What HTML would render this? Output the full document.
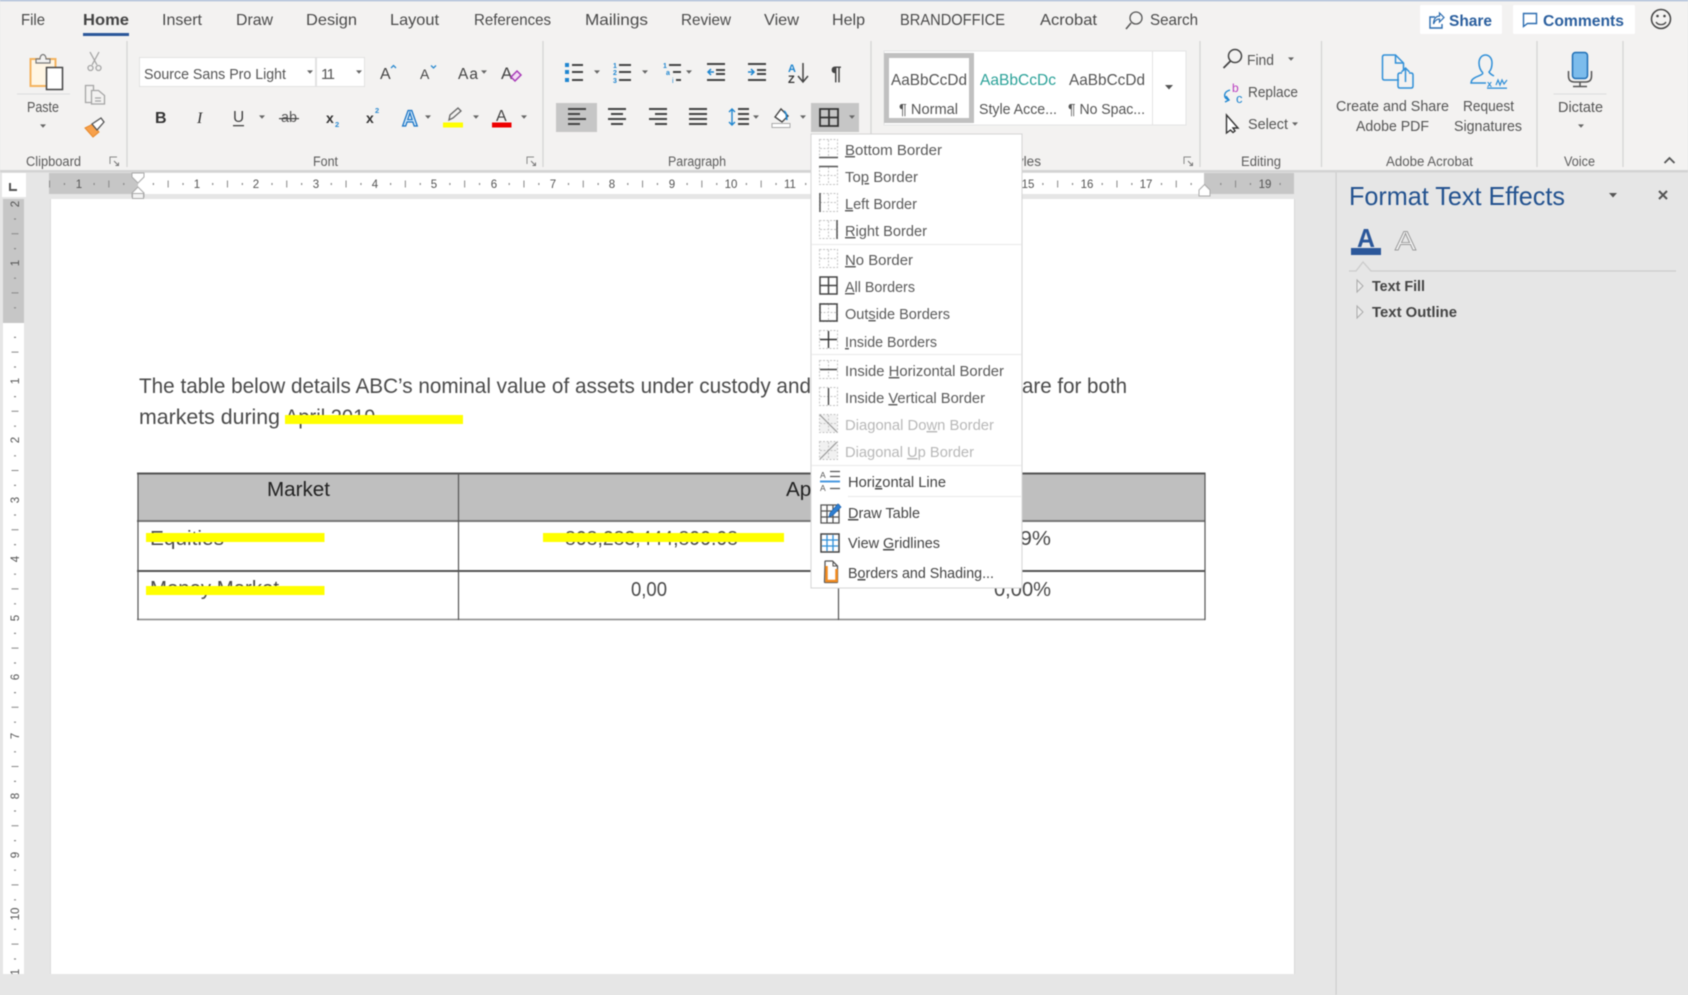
<!DOCTYPE html>
<html lang="en"><head><meta charset="utf-8"><title>Word - Borders menu</title>
<style>
html,body{margin:0;padding:0;width:1688px;height:995px;overflow:hidden;background:#e6e6e6}
svg{display:block;position:absolute;left:0;top:0;filter:blur(.45px)}
text{font-family:"Liberation Sans",sans-serif}
.tab{font-size:16px;fill:#4a4a4a}
.lb{font-size:13.5px;fill:#5c5c5c}
.rb{font-size:14.5px;fill:#555}
.m{font-size:14.5px;fill:#5a5a5a}
.d{fill:#b8b8b8}
.doc{font-size:21px;fill:#4a4a4a}
.tb{font-size:20px;fill:#4a4a4a}
.rn{font-size:11.5px;fill:#555;text-anchor:middle}
.u{text-decoration:underline}
.sd{fill:none;stroke:#444;stroke-width:2}
</style></head><body>
<svg width="1688" height="995" viewBox="0 0 1688 995" xmlns="http://www.w3.org/2000/svg">
<defs>
<path id="ar" d="M-3-1.6h6l-3 3.4z" fill="#666"/>
<g id="gr" fill="none" stroke="#c4c4c4" stroke-width="1" stroke-dasharray="2 1.5"><rect x=".5" y=".5" width="18" height="18"/><path d="M9.5 1v17M1 9.5h17"/></g>
<g id="lau" fill="none" stroke="#888" stroke-width="1"><path d="M0 7V0h7"/><path d="M4 4l4.5 4.5M8.5 5.5v3h-3" stroke="#777"/></g>
</defs>

<!-- backgrounds -->
<rect width="1688" height="995" fill="#e6e6e6"/>
<rect width="1688" height="170" fill="#f3f2f1"/>
<rect width="1688" height="1.2" fill="#a4b8d8"/>
<rect y="170" width="1688" height="2.5" fill="#d4d4d4"/>

<!-- tabs -->
<text class="tab" x="21" y="25" textLength="24" lengthAdjust="spacingAndGlyphs">File</text>
<text class="tab" x="83" y="25" textLength="46" lengthAdjust="spacingAndGlyphs" style="font-weight:bold;fill:#444">Home</text>
<rect x="83" y="33" width="46" height="3" fill="#2b579a"/>
<text class="tab" x="162" y="25" textLength="40" lengthAdjust="spacingAndGlyphs">Insert</text>
<text class="tab" x="236" y="25" textLength="37" lengthAdjust="spacingAndGlyphs">Draw</text>
<text class="tab" x="306" y="25" textLength="51" lengthAdjust="spacingAndGlyphs">Design</text>
<text class="tab" x="390" y="25" textLength="49" lengthAdjust="spacingAndGlyphs">Layout</text>
<text class="tab" x="474" y="25" textLength="77" lengthAdjust="spacingAndGlyphs">References</text>
<text class="tab" x="585" y="25" textLength="63" lengthAdjust="spacingAndGlyphs">Mailings</text>
<text class="tab" x="681" y="25" textLength="50" lengthAdjust="spacingAndGlyphs">Review</text>
<text class="tab" x="764" y="25" textLength="35" lengthAdjust="spacingAndGlyphs">View</text>
<text class="tab" x="832" y="25" textLength="33" lengthAdjust="spacingAndGlyphs">Help</text>
<text class="tab" x="900" y="25" textLength="105" lengthAdjust="spacingAndGlyphs">BRANDOFFICE</text>
<text class="tab" x="1040" y="25" textLength="57" lengthAdjust="spacingAndGlyphs">Acrobat</text>
<circle cx="1136" cy="18" r="6" fill="none" stroke="#555" stroke-width="1.3"/><path d="M1131 23l-5 6" stroke="#555" stroke-width="1.5"/>
<text class="tab" x="1150" y="25" textLength="48" lengthAdjust="spacingAndGlyphs">Search</text>

<!-- share / comments / smiley -->
<rect x="1420" y="5" width="82" height="29" rx="1.5" fill="#fff"/>
<path d="M1435 17h-5v11h12v-4" fill="none" stroke="#2b6cb0" stroke-width="1.4"/><path d="M1433.500 24c0-5 2.500-8 6-8v-3l4.500 4.500-4.500 4.500v-3c-2.500 0-4.500 1-6 5z" fill="#fff" stroke="#2b6cb0" stroke-width="1.2"/>
<text x="1449" y="26" font-size="16" font-weight="bold" fill="#2b5f9e" textLength="43" lengthAdjust="spacingAndGlyphs">Share</text>
<rect x="1513" y="5" width="122" height="29" rx="1.5" fill="#fff"/>
<path d="M1523.500 13.500h13v10h-9l-4 3z" fill="none" stroke="#2b6cb0" stroke-width="1.4"/>
<text x="1543" y="26" font-size="16" font-weight="bold" fill="#2b5f9e" textLength="81" lengthAdjust="spacingAndGlyphs">Comments</text>
<circle cx="1661" cy="19" r="9.500" fill="none" stroke="#444" stroke-width="1.5"/><circle cx="1657.500" cy="16" r="1.300" fill="#444"/><circle cx="1664.500" cy="16" r="1.300" fill="#444"/><path d="M1656 22c2 3.500 8 3.500 10 0" fill="none" stroke="#444" stroke-width="1.300"/>

<!-- group separators -->
<g stroke="#d3d3d3" stroke-width="1.2"><path d="M127 41v126M543 41v126M871 41v126M1200 41v126M1321.500 41v126M1537 41v126M1623 41v126"/></g>

<!-- Clipboard -->
<rect x="30.500" y="59" width="25" height="27" fill="#fff6e4" stroke="#f4b35e" stroke-width="2"/>
<path d="M36 63v-4h4c0-6 6-6 6 0h4v4z" fill="#f3f2f1" stroke="#777" stroke-width="1.200"/>
<rect x="46.500" y="67.500" width="16" height="22" fill="#fff" stroke="#444" stroke-width="1.500"/>
<rect x="17" y="93.500" width="53" height="1" fill="#dcdcdc"/>
<text class="rb" x="27" y="112" textLength="32" lengthAdjust="spacingAndGlyphs">Paste</text>
<use href="#ar" x="43" y="126"/>
<g fill="none" stroke="#a5a5a5" stroke-width="1.300"><path d="M90 52l7 13M99 52l-7 13"/><circle cx="90.500" cy="68" r="2.500"/><circle cx="98.500" cy="68" r="2.500"/></g>
<g fill="#f3f2f1" stroke="#a5a5a5" stroke-width="1.300"><path d="M85.500 85.500h8v17h-8z"/><path d="M91.500 90.500h7l6 5v8.500h-13z"/><path d="M95 98h6M95 101h6" fill="none"/></g>
<path d="M85 128l8-4 6 8-6 5z" fill="#f7a04a" stroke="#e88a2c" stroke-width="1"/><path d="M92 124l9-6 3 4-7 8z" fill="#fff" stroke="#555" stroke-width="1.300"/>
<text class="lb" x="26" y="166" textLength="55" lengthAdjust="spacingAndGlyphs">Clipboard</text>
<use href="#lau" x="110" y="157"/>

<!-- Font -->
<rect x="139.500" y="57.500" width="176" height="29" fill="#fff" stroke="#e2e2e2"/>
<rect x="316.500" y="57.500" width="48" height="29" fill="#fff" stroke="#e2e2e2"/>
<text class="rb" x="144" y="79" textLength="142" lengthAdjust="spacingAndGlyphs">Source Sans Pro Light</text>
<use href="#ar" x="310" y="72"/>
<text x="321" y="79" font-size="15" fill="#555" textLength="14" lengthAdjust="spacing">11</text>
<use href="#ar" x="359" y="72"/>
<text x="380" y="79" font-size="16" fill="#444">A</text><path d="M391 68l2.500-2.500 2.500 2.500" fill="none" stroke="#2b8ad0" stroke-width="1.300"/>
<text x="420" y="79" font-size="14" fill="#444">A</text><path d="M431 65.500l2.500 2.500 2.500-2.500" fill="none" stroke="#2b8ad0" stroke-width="1.300"/>
<text x="458" y="79" font-size="15.500" fill="#444" textLength="20" lengthAdjust="spacing">Aa</text>
<use href="#ar" x="484" y="72"/>
<text x="501" y="79" font-size="17" fill="#444">A</text><path d="M511 77l6-6 4 4-6 6z" fill="#f3dcf4" stroke="#a83bb8" stroke-width="1.500"/>

<text x="155" y="123" font-size="16" font-weight="bold" fill="#333">B</text>
<text x="197" y="123" font-size="16" font-style="italic" fill="#333" style="font-family:'Liberation Serif',serif">I</text>
<text x="233" y="122" font-size="15.500" fill="#444">U</text><rect x="233" y="125" width="11" height="1.300" fill="#444"/>
<use href="#ar" x="262" y="117"/>
<text x="281" y="122" font-size="15" fill="#555" textLength="16" lengthAdjust="spacingAndGlyphs">ab</text><rect x="279" y="118" width="20" height="1.200" fill="#444"/>
<text x="326" y="123" font-size="14" font-weight="bold" fill="#333">x</text><text x="335" y="127" font-size="7.500" font-weight="bold" fill="#2b8ad0">2</text>
<text x="366" y="123" font-size="14" font-weight="bold" fill="#333">x</text><text x="375" y="113" font-size="7.500" font-weight="bold" fill="#2b8ad0">2</text>
<text x="402" y="126" font-size="22" font-weight="bold" fill="#cfe6f8" stroke="#1672c4" stroke-width="1.200">A</text>
<use href="#ar" x="428" y="117"/>
<path d="M449 120l1-5 8-7 3 3-8 7z" fill="#f3f2f1" stroke="#666" stroke-width="1.300"/>
<rect x="443" y="122.500" width="20" height="5" fill="#ffff00"/>
<use href="#ar" x="476" y="117"/>
<text x="496" y="121" font-size="16" fill="#444">A</text>
<rect x="492" y="122.500" width="19.500" height="5" fill="#ee0000"/>
<use href="#ar" x="524" y="117"/>
<text class="lb" x="313" y="166" textLength="25" lengthAdjust="spacingAndGlyphs">Font</text>
<use href="#lau" x="527" y="157"/>

<!-- Paragraph row 1 -->
<g fill="#1f86d0"><rect x="565" y="63" width="4" height="4"/><rect x="565" y="70" width="4" height="4"/><rect x="565" y="78" width="4" height="4"/></g>
<path d="M572 65h11M572 72h11M572 80h11" class="sd"/>
<use href="#ar" x="597" y="72"/>
<text x="613" y="68" font-size="7" font-weight="bold" fill="#1f86d0">1</text><text x="613" y="75" font-size="7" font-weight="bold" fill="#1f86d0">2</text><text x="613" y="83" font-size="7" font-weight="bold" fill="#1f86d0">3</text>
<path d="M619 65h12M619 72h12M619 80h12" class="sd"/>
<use href="#ar" x="645" y="72"/>
<text x="663" y="68" font-size="7" font-weight="bold" fill="#1f86d0">1</text><path d="M669 65h12" class="sd"/>
<text x="666" y="75" font-size="7" font-weight="bold" fill="#1f86d0">a</text><path d="M673 72h8" class="sd"/>
<text x="672" y="83" font-size="7" fill="#1f86d0">i</text><path d="M676 80h5" class="sd"/>
<use href="#ar" x="689" y="72"/>
<path d="M707 64h18M716 70h9M716 74h9M707 80h18" class="sd"/><path d="M714 72h-6m3-3l-3 3 3 3" fill="none" stroke="#1f86d0" stroke-width="1.500"/>
<path d="M748 64h18M757 70h9M757 74h9M748 80h18" class="sd"/><path d="M748 72h6m-3-3l3 3-3 3" fill="none" stroke="#1f86d0" stroke-width="1.500"/>
<text x="788" y="72" font-size="11" font-weight="bold" fill="#1f86d0">A</text><text x="788" y="83" font-size="11" font-weight="bold" fill="#333">Z</text>
<path d="M803 63v18m-5-5l5 6 5-6" fill="none" stroke="#444" stroke-width="1.500"/>
<text x="831" y="80" font-size="19" font-weight="bold" fill="#444">¶</text>

<!-- Paragraph row 2 -->
<rect x="556" y="103" width="41" height="29" fill="#c6c6c6"/>
<path d="M568 109h18M568 114h12M568 119h18M568 124h12" class="sd"/>
<path d="M608 109h18M611 114h12M608 119h18M611 124h12" class="sd"/>
<path d="M649 109h18M655 114h12M649 119h18M655 124h12" class="sd"/>
<path d="M689 109h18M689 114h18M689 119h18M689 124h18" class="sd"/>
<path d="M729 112l3-3 3 3M732 109v16M729 122l3 3 3-3" fill="none" stroke="#1f86d0" stroke-width="1.400"/>
<path d="M738 109h11M738 114h11M738 119h11M738 124h11" class="sd"/>
<use href="#ar" x="756" y="117"/>
<path d="M775 117l6-8 7 7-6 6z" fill="#fff" stroke="#444" stroke-width="1.400"/><path d="M787 120c-1-4 0-7-3-9" fill="none" stroke="#1f86d0" stroke-width="1.600"/>
<rect x="772" y="123.500" width="18" height="4" fill="#fff" stroke="#aaa"/>
<use href="#ar" x="803" y="117"/>
<rect x="811" y="103" width="48" height="29" fill="#c6c6c6"/>
<path d="M820 109h18v17h-18zM829 109v17M820 117.500h18" fill="none" stroke="#333" stroke-width="1.800"/>
<use href="#ar" x="852" y="117"/>
<text class="lb" x="668" y="166" textLength="58" lengthAdjust="spacingAndGlyphs">Paragraph</text>

<!-- Styles -->
<rect x="884" y="51" width="302" height="74" fill="#fff" stroke="#e4e4e4"/>
<rect x="886.500" y="55.500" width="85" height="65" fill="#fff" stroke="#c0c0c0" stroke-width="5"/>
<path d="M1152.500 51v74" stroke="#e4e4e4" stroke-width="1"/>
<text x="891" y="85" font-size="16" fill="#555" textLength="76" lengthAdjust="spacingAndGlyphs">AaBbCcDd</text>
<text class="rb" x="899" y="114" textLength="59" lengthAdjust="spacingAndGlyphs">¶ Normal</text>
<text x="980" y="85" font-size="16" fill="#2aa198" textLength="76" lengthAdjust="spacingAndGlyphs">AaBbCcDc</text>
<text class="rb" x="979" y="114" textLength="78" lengthAdjust="spacingAndGlyphs">Style Acce...</text>
<text x="1069" y="85" font-size="16" fill="#555" textLength="76" lengthAdjust="spacingAndGlyphs">AaBbCcDd</text>
<text class="rb" x="1068" y="114" textLength="77" lengthAdjust="spacingAndGlyphs">¶ No Spac...</text>
<path d="M1165 85h8l-4 4.500z" fill="#555"/>
<text class="lb" x="1004" y="166" textLength="37" lengthAdjust="spacingAndGlyphs">Styles</text>
<use href="#lau" x="1184" y="157"/>

<!-- Editing -->
<circle cx="1235" cy="56" r="6.500" fill="none" stroke="#444" stroke-width="1.500"/><path d="M1230.500 61l-7 7" stroke="#444" stroke-width="1.800"/>
<text class="rb" x="1247" y="65" textLength="27" lengthAdjust="spacingAndGlyphs">Find</text>
<use href="#ar" x="1291" y="59"/>
<text x="1232" y="92" font-size="12" fill="#b83bbf">b</text><text x="1236" y="103" font-size="13" fill="#1f86d0">c</text>
<path d="M1230 90c-7 2-7 8-1 10m-3-4l3 4-4 2" fill="none" stroke="#1f86d0" stroke-width="1.400"/>
<text class="rb" x="1248" y="97" textLength="50" lengthAdjust="spacingAndGlyphs">Replace</text>
<path d="M1226.500 115v18l4-3 2.500 2.500 2-1.500-2-3h5z" fill="#fff" stroke="#333" stroke-width="1.400"/>
<text class="rb" x="1248" y="129" textLength="40" lengthAdjust="spacingAndGlyphs">Select</text>
<use href="#ar" x="1295" y="124"/>
<text class="lb" x="1241" y="166" textLength="40" lengthAdjust="spacingAndGlyphs">Editing</text>

<!-- Acrobat -->
<path d="M1399 80h-14.500q-2 0-2-2V57q0-2 2-2h11l8 8v8" fill="none" stroke="#2f8fd8" stroke-width="1.500"/><path d="M1395.500 55v8h8" fill="none" stroke="#2f8fd8" stroke-width="1.500"/>
<path d="M1398 75v11q0 2 2 2h11q2 0 2-2V75q0-2-2-2h-2M1402 73h-2q-2 0-2 2" fill="none" stroke="#2f8fd8" stroke-width="1.500"/><path d="M1405.500 82V68m-4 4l4-4 4 4" fill="none" stroke="#2f8fd8" stroke-width="1.500"/>
<text class="rb" x="1336" y="111" textLength="113" lengthAdjust="spacingAndGlyphs">Create and Share</text>
<text class="rb" x="1356" y="131" textLength="73" lengthAdjust="spacingAndGlyphs">Adobe PDF</text>
<path d="M1483 73c-3-3-4-6-4-10 0-5 3-8 6.500-8s6.500 3 6.500 8c0 4-1 7-3 9 1 2 3 3 5 4M1483 73c-1 3-8 3-11 7-1 2-1 3-1 3h15" fill="none" stroke="#2f8fd8" stroke-width="1.500"/>
<text x="1487" y="87" font-size="9" font-weight="bold" fill="#2f8fd8">x</text><path d="M1496 85l2-5 2 5 2-5 2 4 3-4" fill="none" stroke="#2f8fd8" stroke-width="1.200"/><rect x="1487" y="87.500" width="20" height="1.300" fill="#2f8fd8"/>
<text class="rb" x="1463" y="111" textLength="51" lengthAdjust="spacingAndGlyphs">Request</text>
<text class="rb" x="1454" y="131" textLength="68" lengthAdjust="spacingAndGlyphs">Signatures</text>
<text class="lb" x="1386" y="166" textLength="87" lengthAdjust="spacingAndGlyphs">Adobe Acrobat</text>

<!-- Voice -->
<rect x="1572.500" y="52.500" width="15" height="26" rx="3" fill="#7cbcec" stroke="#1f6fb5" stroke-width="1.500"/>
<path d="M1568.500 71v5q0 6 6 6h11q6 0 6-6v-5" fill="none" stroke="#555" stroke-width="1.500"/><path d="M1580 82v4M1573 86.500h14" stroke="#555" stroke-width="1.500"/>
<rect x="1553.500" y="93.500" width="53" height="1" fill="#dcdcdc"/>
<text class="rb" x="1558" y="112" textLength="45" lengthAdjust="spacingAndGlyphs">Dictate</text>
<use href="#ar" x="1581" y="126"/>
<text class="lb" x="1564" y="166" textLength="31" lengthAdjust="spacingAndGlyphs">Voice</text>
<path d="M1664.500 163l5-5 5 5" fill="none" stroke="#555" stroke-width="1.800"/>

<!-- tab selector + rulers -->
<rect x="2" y="173" width="24" height="24" fill="#fff"/>
<path d="M10 183v7h7" fill="none" stroke="#555" stroke-width="2"/>
<rect x="49" y="173" width="89" height="21" fill="#c6c6c6"/>
<rect x="138" y="173" width="1066" height="21" fill="#fff"/>
<rect x="1204" y="173" width="90" height="21" fill="#c6c6c6"/>
<g fill="none" stroke="#888">
<line x1="63.850" x2="1290" y1="184" y2="184" stroke-dasharray="1.200 28.450" stroke-width="2"/>
<line x1="49.050" x2="1290" y1="184" y2="184" stroke-dasharray="1 58.300" stroke-width="7"/>
</g>
<text class="rn" x="79" y="188">1</text><text class="rn" x="197" y="188">1</text><text class="rn" x="256" y="188">2</text><text class="rn" x="316" y="188">3</text><text class="rn" x="375" y="188">4</text><text class="rn" x="434" y="188">5</text><text class="rn" x="494" y="188">6</text><text class="rn" x="553" y="188">7</text><text class="rn" x="612" y="188">8</text><text class="rn" x="672" y="188">9</text><text class="rn" x="731" y="188">10</text><text class="rn" x="790" y="188">11</text><text class="rn" x="1028" y="188">15</text><text class="rn" x="1087" y="188">16</text><text class="rn" x="1146" y="188">17</text><text class="rn" x="1265" y="188">19</text>
<path d="M132 173h12v4l-6 6-6-6zM132 197v-4l6-6 6 6v4z" fill="#fff" stroke="#aaa" stroke-width="1"/><rect x="132.500" y="193.500" width="11" height="5" fill="#f3f3f3" stroke="#aaa"/>
<path d="M1199 196v-6l5.500-5.500 5.500 5.500v6z" fill="#fff" stroke="#aaa"/>

<rect x="3" y="199" width="21" height="124" fill="#c6c6c6"/>
<rect x="3" y="323" width="21" height="651" fill="#fff"/>
<g fill="none" stroke="#888">
<line y1="218.400" y2="974" x1="15" x2="15" stroke-dasharray="1.200 28.400" stroke-width="2"/>
<line y1="233.200" y2="974" x1="15" x2="15" stroke-dasharray="1 58.200" stroke-width="7"/>
</g>
<text class="rn" transform="translate(19 204) rotate(-90)">2</text><text class="rn" transform="translate(19 263) rotate(-90)">1</text>
<text class="rn" transform="translate(19 381) rotate(-90)">1</text><text class="rn" transform="translate(19 440) rotate(-90)">2</text><text class="rn" transform="translate(19 500) rotate(-90)">3</text><text class="rn" transform="translate(19 559) rotate(-90)">4</text><text class="rn" transform="translate(19 618) rotate(-90)">5</text><text class="rn" transform="translate(19 677) rotate(-90)">6</text><text class="rn" transform="translate(19 736) rotate(-90)">7</text><text class="rn" transform="translate(19 796) rotate(-90)">8</text><text class="rn" transform="translate(19 855) rotate(-90)">9</text><text class="rn" transform="translate(19 914) rotate(-90)">10</text>
<rect x="3" y="966" width="21" height="8" fill="#fff"/>
<text class="rn" transform="translate(19 972) rotate(-90)">1</text>
<rect x="0" y="974" width="51" height="21" fill="#e6e6e6"/>

<!-- page -->
<rect x="51" y="199" width="1243" height="775" fill="#fff"/>
<rect x="1294" y="199" width="1" height="775" fill="#d8d8d8"/>
<rect x="50" y="199" width="1" height="775" fill="#dcdcdc"/>

<!-- document text -->
<text class="doc" x="139" y="393" textLength="672" lengthAdjust="spacingAndGlyphs">The table below details ABC’s nominal value of assets under custody and</text>
<text class="doc" x="1022" y="393" textLength="105" lengthAdjust="spacingAndGlyphs">are for both</text>
<text class="doc" x="139" y="424" textLength="141" lengthAdjust="spacingAndGlyphs">markets during</text>
<text class="doc" x="285" y="424" textLength="96" lengthAdjust="spacingAndGlyphs">April 2019.</text>
<rect x="285" y="415" width="178" height="9" fill="#ffff00"/>

<!-- table -->
<rect x="138" y="473" width="1067" height="48" fill="#bfbfbf"/>
<g stroke="#555" fill="none">
<path d="M137 473.500h1068.500" stroke-width="2"/>
<path d="M137 521h1068.500" stroke="#777" stroke-width="2"/>
<path d="M137 571h1068.500" stroke-width="2"/>
<path d="M137 619.500h1068.500" stroke="#888" stroke-width="1.500"/>
<path d="M138 473v147M458.500 473v147M1205 473v147" stroke-width="1.200"/>
<path d="M838.500 521v99" stroke-width="1.200"/>
</g>
<text class="tb" x="267" y="496" textLength="63" lengthAdjust="spacingAndGlyphs" style="fill:#222">Market</text>
<text class="tb" x="786" y="496" style="fill:#222" textLength="93" lengthAdjust="spacingAndGlyphs">April 2019</text>
<text class="tb" x="150" y="545" textLength="74" lengthAdjust="spacingAndGlyphs">Equities</text>
<text class="tb" x="565" y="545" textLength="173" lengthAdjust="spacingAndGlyphs">808,283,444,890.08</text>
<text class="tb" x="1020" y="545" textLength="31" lengthAdjust="spacingAndGlyphs">9%</text>
<text class="tb" x="150" y="595" textLength="129" lengthAdjust="spacingAndGlyphs">Money Market</text>
<text class="tb" x="631" y="596" textLength="36" lengthAdjust="spacingAndGlyphs">0,00</text>
<text class="tb" x="994" y="596" textLength="57" lengthAdjust="spacingAndGlyphs">0,00%</text>
<rect x="146" y="533" width="178.500" height="9" fill="#ffff00"/>
<rect x="543" y="533" width="241" height="9" fill="#ffff00"/>
<rect x="146" y="586" width="178.500" height="9" fill="#ffff00"/>

<!-- format text effects pane -->
<rect x="1335.500" y="172" width="1.200" height="823" fill="#cfcfcf"/>
<text x="1349" y="205" font-size="26" fill="#23528f" textLength="216" lengthAdjust="spacingAndGlyphs">Format Text Effects</text>
<path d="M1609 193h8l-4 4.500z" fill="#555"/>
<path d="M1659 191l8 8M1667 191l-8 8" stroke="#555" stroke-width="2"/>
<text x="1357" y="247" font-size="26" font-weight="bold" fill="#2b579a" textLength="18" lengthAdjust="spacingAndGlyphs">A</text>
<rect x="1351" y="248" width="30" height="7" fill="#2b579a"/>
<text x="1395" y="250" font-size="27" fill="#f4f4f4" stroke="#9a9a9a" stroke-width=".9" textLength="21" lengthAdjust="spacingAndGlyphs">A</text>
<path d="M1349 271h7l7-9 8 9h305" fill="none" stroke="#cbcbcb" stroke-width="1.300"/>
<path d="M1357 280l6 6-6 6z" fill="#ececec" stroke="#aaa"/>
<path d="M1357 306l6 6-6 6z" fill="#ececec" stroke="#aaa"/>
<text x="1372" y="291" font-size="14.500" font-weight="bold" fill="#444" textLength="53" lengthAdjust="spacingAndGlyphs">Text Fill</text>
<text x="1372" y="317" font-size="14.500" font-weight="bold" fill="#444" textLength="85" lengthAdjust="spacingAndGlyphs">Text Outline</text>

<!-- borders menu -->
<rect x="811" y="134" width="211" height="454" fill="#fff" stroke="#d4d4d4" stroke-width="1"/>
<path d="M812 244.500h209M812 354.500h209M812 465.500h209M848 496.500h173" stroke="#ebebeb" stroke-width="1.200"/>

<use href="#gr" x="819" y="139"/><path d="M819 157.500h19" stroke="#555" stroke-width="1.500"/>
<text class="m" x="845" y="155" textLength="97" lengthAdjust="spacingAndGlyphs"><tspan class="u">B</tspan>ottom Border</text>
<use href="#gr" x="819" y="166"/><path d="M819 166.500h19" stroke="#555" stroke-width="1.500"/>
<text class="m" x="845" y="182" textLength="73" lengthAdjust="spacingAndGlyphs">To<tspan class="u">p</tspan> Border</text>
<use href="#gr" x="819" y="193"/><path d="M820 193v19" stroke="#555" stroke-width="1.500"/>
<text class="m" x="845" y="209" textLength="72" lengthAdjust="spacingAndGlyphs"><tspan class="u">L</tspan>eft Border</text>
<use href="#gr" x="819" y="220"/><path d="M837 220v19" stroke="#555" stroke-width="1.500"/>
<text class="m" x="845" y="236" textLength="82" lengthAdjust="spacingAndGlyphs"><tspan class="u">R</tspan>ight Border</text>
<use href="#gr" x="819" y="249"/>
<text class="m" x="845" y="265" textLength="68" lengthAdjust="spacingAndGlyphs"><tspan class="u">N</tspan>o Border</text>
<path d="M820 277h17v17h-17zM828.500 277v17M820 285.500h17" fill="none" stroke="#444" stroke-width="1.500"/>
<text class="m" x="845" y="292" textLength="70" lengthAdjust="spacingAndGlyphs"><tspan class="u">A</tspan>ll Borders</text>
<use href="#gr" x="819" y="303"/><rect x="820" y="304" width="17" height="17" fill="none" stroke="#444" stroke-width="1.500"/>
<text class="m" x="845" y="319" textLength="105" lengthAdjust="spacingAndGlyphs">Out<tspan class="u">s</tspan>ide Borders</text>
<use href="#gr" x="819" y="330"/><path d="M828.500 331v17M820 339.500h17" stroke="#333" stroke-width="1.400"/>
<text class="m" x="845" y="347" textLength="92" lengthAdjust="spacingAndGlyphs"><tspan class="u">I</tspan>nside Borders</text>
<use href="#gr" x="819" y="360"/><path d="M820 369.500h17" stroke="#444" stroke-width="1.400"/>
<text class="m" x="845" y="376" textLength="159" lengthAdjust="spacingAndGlyphs">Inside <tspan class="u">H</tspan>orizontal Border</text>
<use href="#gr" x="819" y="387"/><path d="M828.500 388v17" stroke="#444" stroke-width="1.400"/>
<text class="m" x="845" y="403" textLength="140" lengthAdjust="spacingAndGlyphs">Inside <tspan class="u">V</tspan>ertical Border</text>
<rect x="820" y="415" width="17" height="17" fill="#e8e8e8" fill-opacity=".6"/>
<use href="#gr" x="819" y="414"/><path d="M820 415l17 17" stroke="#999" stroke-width="1.200"/>
<text class="m d" x="845" y="430" textLength="149" lengthAdjust="spacingAndGlyphs">Diagonal Do<tspan class="u">w</tspan>n Border</text>
<rect x="820" y="442" width="17" height="17" fill="#e8e8e8" fill-opacity=".6"/>
<use href="#gr" x="819" y="441"/><path d="M820 459l17-17" stroke="#999" stroke-width="1.200"/>
<text class="m d" x="845" y="457" textLength="129" lengthAdjust="spacingAndGlyphs">Diagonal <tspan class="u">U</tspan>p Border</text>
<text x="820" y="478" font-size="8.500" fill="#555">A</text><text x="820" y="491" font-size="8.500" fill="#555">A</text>
<path d="M830 471.500h10M830 476.500h10M830 488.500h10" stroke="#555" stroke-width="1.300"/><rect x="820" y="480.500" width="20" height="2" fill="#4a9ae0"/>
<text class="m" x="848" y="487" style="fill:#444" textLength="98" lengthAdjust="spacingAndGlyphs">Hori<tspan class="u">z</tspan>ontal Line</text>
<path d="M821 505h18v18h-18zM821 511h18M821 517h18M827 505v18M833 505v18" fill="none" stroke="#555" stroke-width="1.300"/>
<path d="M829 517l1-4 8-9 3 3-8 8z" fill="#2f7fd0" stroke="#1f66b5" stroke-width=".8"/>
<text class="m" x="848" y="518" style="fill:#444" textLength="72" lengthAdjust="spacingAndGlyphs"><tspan class="u">D</tspan>raw Table</text>
<rect x="821" y="534" width="18" height="18" fill="#fff" stroke="#444" stroke-width="1.500"/><path d="M827 535v16M833 535v16M822 540h16M822 546h16" stroke="#2f8fd8" stroke-width="1.300"/>
<text class="m" x="848" y="548" style="fill:#444" textLength="92" lengthAdjust="spacingAndGlyphs">View <tspan class="u">G</tspan>ridlines</text>
<path d="M825 565.500v-4q0-.5.500-.5h7l5 5v16q0 .5-.5.500h-12q-.5 0-.5-.5z" fill="#fff" stroke="#555" stroke-width="1.300"/><path d="M826.500 566v15h10v-12" fill="none" stroke="#f28a1e" stroke-width="2.500"/><path d="M833 561v5h5" fill="none" stroke="#555" stroke-width="1"/>
<text class="m" x="848" y="578" style="fill:#444" textLength="146" lengthAdjust="spacingAndGlyphs">B<tspan class="u">o</tspan>rders and Shading...</text>
</svg>
</body></html>
